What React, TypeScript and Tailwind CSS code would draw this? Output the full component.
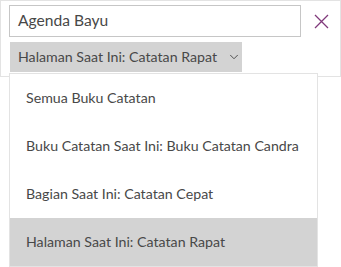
import { ChevronDown } from "lucide-react";

const options = [
  "Semua Buku Catatan",
  "Buku Catatan Saat Ini: Buku Catatan Candra",
  "Bagian Saat Ini: Catatan Cepat",
  "Halaman Saat Ini: Catatan Rapat",
];

export default function App() {
  const selected = 3;

  return (
    <div
      className="relative w-[341px] h-[267px] bg-white text-[#484848]"
      style={{ fontFamily: "Lato, 'Open Sans', sans-serif" }}
    >
      {/* search panel */}
      <div className="h-[77px] border border-[#e3e3e3] pl-2 pt-1">
        <div className="flex items-center">
          <div className="w-[292px] h-[32px] border border-[#c6c6c6] flex items-center px-2 text-[15.6px]">
            Agenda Bayu
          </div>
          <button className="ml-3 w-[16px] h-[16px] flex items-center justify-center">
            <svg width="15" height="15" viewBox="0 0 15 15">
              <path d="M1 1 L14 14 M14 1 L1 14" stroke="#80397b" strokeWidth="1.3" />
            </svg>
          </button>
        </div>
        <div className="mt-[5px] ml-px w-[232px] h-[30px] bg-[#d3d3d3] flex items-center pl-2 text-[14.2px] whitespace-nowrap">
          <span className="flex-1">Halaman Saat Ini: Catatan Rapat</span>
          <ChevronDown className="w-[14px] h-[14px] mr-[1px]" strokeWidth={1.6} />
        </div>
      </div>

      {/* dropdown menu */}
      <div className="absolute left-[9px] top-[73px] w-[309px] border border-[#e3e3e3] bg-white">
        {options.map((o, i) => (
          <div
            key={o}
            className={
              "h-[48px] flex items-center pl-4 text-[14.2px] whitespace-nowrap " +
              (i === selected ? "bg-[#d3d3d3]" : "")
            }
          >
            {o}
          </div>
        ))}
      </div>
    </div>
  );
}
